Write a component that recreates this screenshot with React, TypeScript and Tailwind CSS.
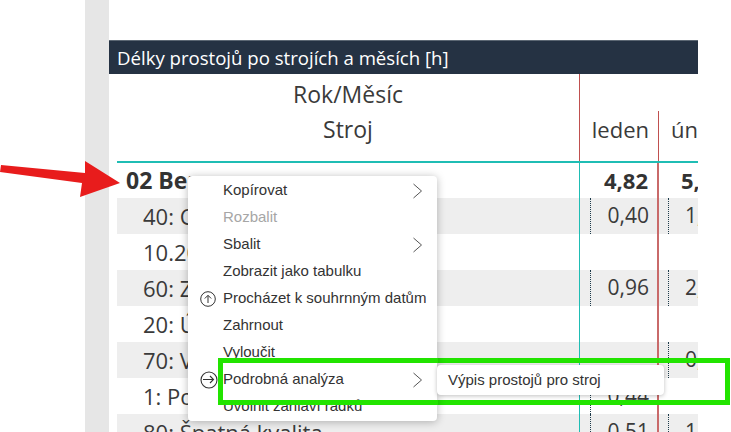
const tableFont = { fontFamily: '"Open Sans", sans-serif' };
const menuFont = { fontFamily: '"Liberation Sans", sans-serif' };

type Row = { label: string; leden?: string; unor?: string; shaded: boolean; dotLeden?: boolean; dotUnor?: boolean };

const rows: Row[] = [
  { label: "40: CNC", leden: "0,40", unor: "1,20", shaded: true, dotLeden: true, dotUnor: true },
  { label: "10.20", shaded: false },
  { label: "60: Zastavení", leden: "0,96", unor: "2,10", shaded: true, dotLeden: true, dotUnor: true },
  { label: "20: Údržba", shaded: false },
  { label: "70: Výměna", unor: "0,30", shaded: true, dotUnor: true },
  { label: "1: Porucha", leden: "0,44", shaded: false, dotLeden: true },
  { label: "80: Špatná kvalita", leden: "0,51", unor: "1,05", shaded: true, dotLeden: true, dotUnor: true },
];

const menuItems = [
  { label: "Kopírovat", sub: true },
  { label: "Rozbalit", disabled: true },
  { label: "Sbalit", sub: true },
  { label: "Zobrazit jako tabulku" },
  { label: "Procházet k souhrnným datům", icon: "up" },
  { label: "Zahrnout" },
  { label: "Vyloučit" },
  { label: "Podrobná analýza", sub: true, icon: "right" },
  { label: "Uvolnit záhlaví řádků" },
];

function Chevron() {
  return (
    <svg width="12" height="16" viewBox="0 0 12 16" fill="none" stroke="#555" strokeWidth="1">
      <path d="M1.5 1L9.5 8L1.5 15" />
    </svg>
  );
}

function CircleIcon({ dir }: { dir: string }) {
  return dir === "up" ? (
    <svg width="16" height="16" viewBox="0 0 16 16" fill="none" stroke="#333" strokeWidth="1">
      <circle cx="8" cy="8" r="7.3" />
      <path d="M8 12V4.5M4.8 7.5L8 4.3L11.2 7.5" />
    </svg>
  ) : (
    <svg width="18" height="18" viewBox="0 0 18 18" fill="none" stroke="#333" strokeWidth="1.1">
      <circle cx="9" cy="9" r="8" />
      <path d="M3 8.5H13.5M10 5L13.5 8.5L10 12" />
    </svg>
  );
}

export default function App() {
  return (
    <div className="relative w-[731px] h-[432px] overflow-hidden bg-white flex" style={tableFont}>
      <div className="w-[85px] shrink-0" />
      <div className="w-[24px] shrink-0 bg-[#e6e6e6]" />

      <div className="w-[589px] shrink-0 pt-[40px] text-[#3a3a3a]">
        <div className="h-[34px] bg-[#253243] text-white text-[18.6px] flex items-center px-2 border-t border-[#5c6773] whitespace-nowrap">
          Délky prostojů po strojích a měsích [h]
        </div>

        {/* header */}
        <div className="pl-2 text-[23px] font-normal">
          <div className="h-[37px] flex">
            <div className="w-[463px] border-r border-[#c0504f] flex items-center justify-center pt-[4px]">Rok/Měsíc</div>
          </div>
          <div className="h-[52px] flex border-b-2 border-[#1fbdb4]">
            <div className="w-[463px] border-r border-[#c0504f] flex items-center justify-center pb-[13px]">Stroj</div>
            <div className="w-[79px] border-r border-[#c0504f] flex items-center justify-end pr-[9px] pb-[14px] text-[22px]">leden</div>
            <div className="flex-1 overflow-hidden flex items-center pl-[12px] pb-[14px] text-[22px]">únor</div>
          </div>
        </div>

        {/* total row */}
        <div className="pl-2 h-[35px] flex text-[22px] font-bold text-[#333]">
          <div className="w-[463px] border-r border-[#1fbdb4] flex items-center pl-[9px] text-[23px]">02 Beroun</div>
          <div className="w-[79px] border-r-2 border-[#c96a6a] flex items-center justify-end pr-[9px]">4,82</div>
          <div className="flex-1 overflow-hidden flex items-center pl-[22px] whitespace-nowrap">5,17</div>
        </div>

        {/* rows */}
        <div className="pl-2 text-[22px]">
          {rows.map((r) => (
            <div key={r.label} className={`h-[36px] flex ${r.shaded ? "bg-[#eeeeee]" : "bg-white"}`}>
              <div className="w-[463px] border-r border-[#1fbdb4] flex items-center pl-[26px] whitespace-nowrap">{r.label}</div>
              <div className="w-[79px] border-r-2 border-[#c96a6a] flex text-[21px]">
                <div className={`ml-[10px] flex-1 flex items-center justify-end pr-[8px] border-l border-dotted ${r.dotLeden ? "border-[#1d3a4a]" : "border-transparent"}`}>
                  {r.leden}
                </div>
              </div>
              <div className="flex-1 overflow-hidden flex text-[21px]">
                <div className={`ml-[9px] flex-1 flex items-center pl-[16px] whitespace-nowrap border-l border-dotted ${r.dotUnor ? "border-[#1d3a4a]" : "border-transparent"}`}>
                  {r.unor}
                </div>
              </div>
            </div>
          ))}
        </div>
      </div>

      {/* red arrow */}
      <svg className="absolute left-0 top-[158px]" width="124" height="42" viewBox="0 0 124 42">
        <polygon points="1,7 85,15 85,3 120,25 80,39 82,25 0,14" fill="#e81c1c" />
      </svg>

      {/* green highlight */}
      <div className="absolute left-[218px] top-[358px] w-[512px] h-[47px] border-[5px] border-[#22e400]" />

      {/* context menu */}
      <div
        className="absolute left-[188px] top-[176px] w-[249px] rounded-[4px] bg-white pt-[1px] pb-[1px] shadow-[0_1px_8px_rgba(0,0,0,0.28)] text-[15px] text-[#333]"
        style={menuFont}
      >
        {menuItems.map((m) => (
          <div key={m.label} className={`relative h-[27px] flex items-center pl-[36px] pr-[13px] ${m.disabled ? "text-[#a6a6a6]" : ""}`}>
            {m.icon && (
              <span className="absolute left-[12px] top-1/2 -translate-y-1/2 flex">
                <CircleIcon dir={m.icon} />
              </span>
            )}
            <span className="flex-1 whitespace-nowrap -ml-px">{m.label}</span>
            {m.sub && <Chevron />}
          </div>
        ))}
      </div>

      {/* green line passes above the menu */}
      <div className="absolute left-[218px] top-[358px] w-[220px] h-[47px] border-[5px] border-r-0 border-[#22e400]" />

      {/* submenu */}
      <div
        className="absolute left-[437px] top-[365px] w-[227px] h-[30px] rounded-[4px] bg-white flex items-center pl-[11px] shadow-[0_1px_4px_rgba(0,0,0,0.25)] text-[15px] text-[#333]"
        style={menuFont}
      >
        Výpis prostojů pro stroj
      </div>
    </div>
  );
}
